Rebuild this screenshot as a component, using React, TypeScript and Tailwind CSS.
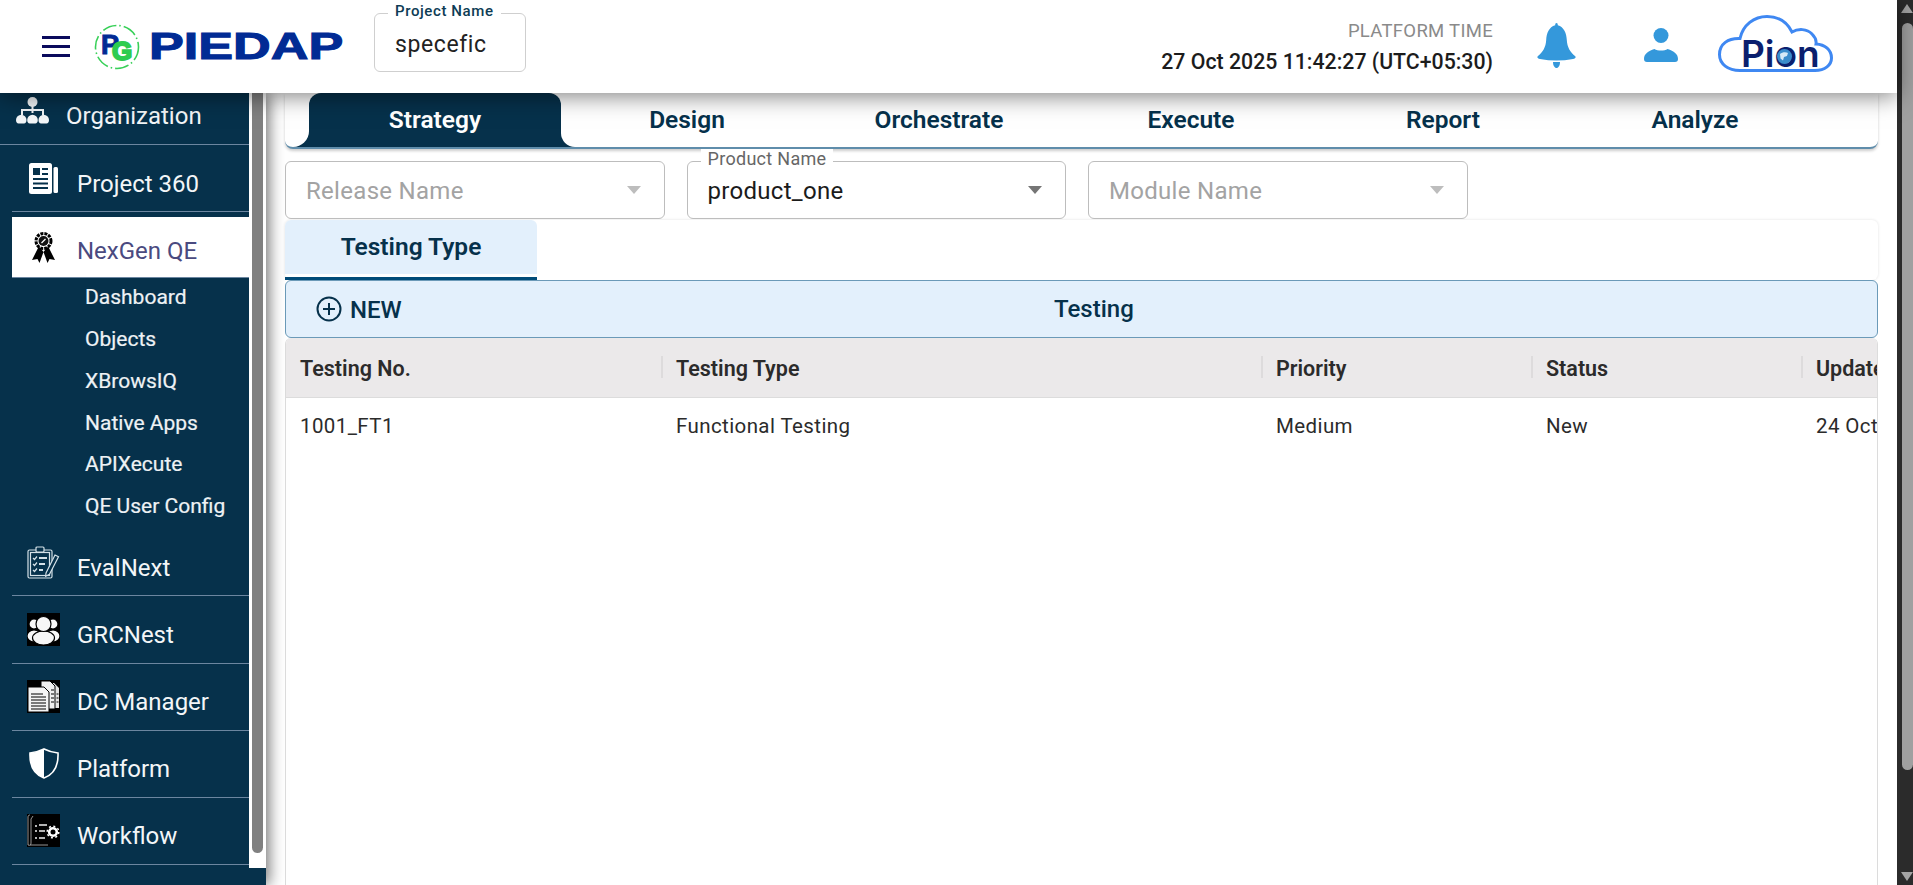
function LogoMark() {
  return (
    <svg width="46" height="46" viewBox="0 0 46 46" className="shrink-0">
      <circle cx="23" cy="23" r="21.5" fill="none" stroke="#38d058" strokeWidth="1.6" strokeDasharray="14 3 1.5 3" />
      <text x="7" y="30" fontFamily="Liberation Sans" fontWeight="700" fontSize="27" fill="#012b94" stroke="#012b94" strokeWidth="1">P</text>
      <text x="18" y="36" fontFamily="Liberation Sans" fontWeight="700" fontSize="26" fill="#2ecc4f" stroke="#2ecc4f" strokeWidth="2">G</text>
    </svg>
  )
}

function Bell() {
  return (
    <svg width="39" height="45" viewBox="0 0 39 45" fill="#3498db">
      <path d="M19.5 0c.9 0 1.3.8 1.3 2.2C27 4 29.5 10 29.8 17c.4 7 3.2 12 8.2 16 1.3 1.3.5 2.5-2 3-11 2-22 2-33 0-2.500-.5-3.300-1.700-2-3 5-4 7.800-9 8.200-16C9.500 10 12 4 18.200 2.200 18.200.8 18.600 0 19.500 0Z" />
      <path d="M16 39h7c0 3.500-1.600 6-3.500 6S16 42.500 16 39Z" />
    </svg>
  )
}

function Person() {
  return (
    <svg width="34" height="34" viewBox="0 0 34 34" fill="#3498db">
      <circle cx="17" cy="7.500" r="7.500" />
      <path d="M0 31c0-5 4-8 10.500-10 3 2 10 2 13 0C30 23 34 26 34 31c0 2-1 3-3 3H3c-2 0-3-1-3-3Z" />
    </svg>
  )
}

function PionLogo() {
  return (
    <svg width="115" height="57" viewBox="0 0 115 57" className="shrink-0">
      <path
        d="M22 55.500C10 55.500 1.500 49 1.500 39.500 1.500 29 10 23 22 23.500 25 10 36 1.500 49 1.500c11 0 20 5.500 25 15.500 6-3.500 15-3.500 20 2 3 3 4.500 7 4 10 9 .5 15.500 6 15.500 14 0 7-6.500 12.500-16.500 12.500Z"
        fill="#fff"
        stroke="#3f88f2"
        strokeWidth="3"
      />
      <text x="23" y="52" fontFamily="Inter" fontWeight="600" fontSize="37" fill="#0b1f6e">
        Pion
      </text>
      <circle cx="66.500" cy="41.500" r="7.500" fill="#3a8ccc" />
      <path d="M62 39c2-2 6-2.500 8-1l-1 3-3 1-1 3.500-2.500-2Z" fill="#d6eaf7" />
    </svg>
  )
}

function OrgIcon() {
  return (
    <svg width="33" height="27" viewBox="0 0 33 27" fill="#f3f6f8">
      <circle cx="16.500" cy="5" r="5" />
      <rect x="15.500" y="8" width="2" height="8" />
      <rect x="5" y="12" width="23" height="2" />
      <rect x="5" y="12" width="2" height="6" />
      <rect x="26" y="12" width="2" height="6" />
      <path d="M0 23a5 5 0 0 1 10.500 0c0 2-1 3.500-2.500 3.500H2.500C1 26.500 0 25 0 23Z" />
      <path d="M11.200 23a5.300 5.300 0 0 1 10.600 0c0 2-1 3.500-2.500 3.500h-5.600c-1.500 0-2.500-1.500-2.500-3.500Z" />
      <path d="M22.500 23a5 5 0 0 1 10.500 0c0 2-1 3.500-2.500 3.500H25c-1.500 0-2.500-1.500-2.500-3.500Z" />
    </svg>
  )
}

function NewsIcon() {
  return (
    <svg width="29" height="31" viewBox="0 0 29 31">
      <rect x="0" y="0" width="23" height="31" rx="2.500" fill="#fff" />
      <rect x="24.500" y="4" width="4.500" height="26" rx="1.500" fill="#fff" />
      <g fill="#06314b">
        <rect x="4" y="5" width="7" height="7" />
        <rect x="13" y="5" width="6" height="2" />
        <rect x="13" y="10" width="6" height="2" />
        <rect x="4" y="15" width="15" height="2" />
        <rect x="4" y="19.500" width="15" height="2" />
        <rect x="4" y="24" width="15" height="2" />
      </g>
    </svg>
  )
}

function MedalIcon() {
  return (
    <svg width="23" height="31" viewBox="0 0 23 31">
      <path d="M7 14 0 28l5.500-1 2 4 4-11Zm9 0 7 14-5.500-1-2 4-4-11Z" fill="#000" />
      <path d="M11 18v-4" stroke="#fff" strokeWidth="1" />
      <circle cx="11.500" cy="9" r="7.500" fill="#fff" stroke="#000" strokeWidth="3" strokeDasharray="3 1" />
      <circle cx="11.500" cy="9" r="5" fill="#111" />
      <path d="M9.500 11l4-4" stroke="#fff" strokeWidth="1.200" />
    </svg>
  )
}

function EvalIcon() {
  return (
    <svg width="33" height="33" viewBox="0 0 33 33" fill="none" stroke="#d4e1e8" strokeWidth="1.200">
      <rect x="1" y="4" width="24" height="28" rx="1.500" />
      <rect x="3.500" y="6.500" width="19" height="23" />
      <rect x="9" y="1" width="8" height="5" rx="1" fill="#06314b" />
      <path d="M6 12l1.500 1.500L10 10.500M6 18l1.500 1.500L10 16.500M6 24l1.500 1.500L10 22.500" />
      <path d="M12 12h8M12 18h6M12 24h4" strokeWidth="1.800" />
      <path d="M19 27l9-18 3.500 1.800-9 17.500-3.800 2Z" fill="#06314b" />
    </svg>
  )
}

function UsersIcon() {
  return (
    <svg width="33" height="33" viewBox="0 0 33 33">
      <rect width="33" height="33" fill="#000" />
      <g fill="#f7f7f7" stroke="#000" strokeWidth="1.200">
        <circle cx="7" cy="11" r="5" />
        <circle cx="26" cy="11" r="5" />
        <ellipse cx="7" cy="23" rx="7" ry="6" />
        <ellipse cx="26" cy="23" rx="7" ry="6" />
        <ellipse cx="16.500" cy="25" rx="11" ry="7" />
        <circle cx="16.500" cy="11" r="7.500" />
      </g>
    </svg>
  )
}

function DocsIcon() {
  return (
    <svg width="33" height="33" viewBox="0 0 33 33">
      <rect width="33" height="33" fill="#000" />
      <path d="M20 3h7l5 5v20H20Z" fill="#e4e4e4" />
      <path d="M14 1h9l5 5v23H14Z" fill="#f0f0f0" stroke="#000" />
      <path d="M1 7h16l5 5v20H1Z" fill="#f4f4f4" stroke="#000" />
      <path d="M4 14h12M4 17h15M4 20h15M4 23h15M4 26h15M4 29h15M24 10h3M24 14h3M24 18h3M24 22h3M29.500 14h2M29.500 18h2M29.500 22h2" stroke="#000" strokeWidth="1.200" />
    </svg>
  )
}

function WorkflowIcon() {
  return (
    <svg width="33" height="33" viewBox="0 0 33 33">
      <rect width="33" height="33" fill="#000" />
      <path d="M1 31V3c0-1.500 1-2 2-2M1 31c2 .8 3 0 3-2V5l2-3" fill="none" stroke="#bbb" strokeWidth=".8" />
      <path d="M3 31h18" stroke="#bbb" strokeWidth=".8" />
      <path d="M8 12h2M12 11h8M8 17h2M12 17h6M8 24h2M12 24h6" stroke="#eee" strokeWidth="1.500" />
      <circle cx="26" cy="18" r="3.800" fill="none" stroke="#fff" strokeWidth="2.600" />
      <circle cx="26" cy="18" r="5.800" fill="none" stroke="#fff" strokeWidth="1.500" strokeDasharray="2 2.500" />
    </svg>
  )
}

function ShieldIcon() {
  return (
    <svg width="30" height="31" viewBox="0 0 30 31">
      <path d="M15 1C10 3.500 6 4.500 1 5c-.5 12 3 21 14 25 11-4 14.500-13 14-25-5-.5-9-1.500-14-4Z" fill="none" stroke="#fff" strokeWidth="1.600" />
      <path d="M15 1C10 3.500 6 4.500 1 5c-.5 12 3 21 14 25Z" fill="#fff" />
    </svg>
  )
}

function NavRow({ icon, label, className }: { icon: React.ReactNode; label: string; className: string }) {
  return (
    <div className={`ml-[12px] flex items-center border-b border-[#6c86a0] pl-[15px] ${className}`}>
      <div className="flex w-[33px] shrink-0 justify-center">{icon}</div>
      <span className="ml-[17px] mt-[10px] text-[24px] leading-[26px] text-[#f3f6f8]">{label}</span>
    </div>
  )
}

function Sidebar() {
  const subItems = ['Dashboard', 'Objects', 'XBrowsIQ', 'Native Apps', 'APIXecute', 'QE User Config']
  return (
    <aside className="relative z-10 w-[266px] shrink-0 bg-[#06314b] shadow-[3px_0_14px_rgba(0,0,0,0.55)]">
      <div className="flex h-[775px] overflow-hidden">
        <nav className="w-[249px] shrink-0">
          <div className="flex h-[52px] items-center border-b border-[#6c86a0] pb-[16px] pl-[16px]">
            <div className="w-[33px] shrink-0">
              <OrgIcon />
            </div>
            <span className="ml-[17px] mt-[10px] text-[24px] leading-[26px] text-[#f3f6f8]">Organization</span>
          </div>
          <NavRow icon={<NewsIcon />} label="Project 360" className="h-[67px] pt-px" />
          <div className="ml-[12px] mt-[5px] flex h-[61px] items-center border-b border-[#6c86a0] bg-white pl-[15px]">
            <div className="flex w-[33px] shrink-0 justify-center">
              <MedalIcon />
            </div>
            <span className="ml-[17px] mt-[7px] text-[24px] leading-[26px] text-[#4a4a80]">NexGen QE</span>
          </div>
          <div className="-mt-px pl-[85px]">
            {subItems.map((item) => (
              <div key={item} className="flex h-[41.800px] items-center text-[21px] text-[#eef2f5] [-webkit-text-stroke:0.2px_#eef2f5]">
                {item}
              </div>
            ))}
          </div>
          <NavRow icon={<EvalIcon />} label="EvalNext" className="h-[68px] pt-[3px]" />
          <NavRow icon={<UsersIcon />} label="GRCNest" className="h-[68px] pt-px" />
          <NavRow icon={<DocsIcon />} label="DC Manager" className="h-[67px]" />
          <NavRow icon={<ShieldIcon />} label="Platform" className="h-[67px]" />
          <NavRow icon={<WorkflowIcon />} label="Workflow" className="h-[67px]" />
        </nav>
        <div className="w-[17px] bg-white pl-[3px]">
          <div className="h-[760px] w-[11px] rounded-b-lg bg-[#808080]" />
        </div>
      </div>
    </aside>
  )
}

function Header() {
  return (
    <header className="relative z-20 flex h-[93px] shrink-0 items-center bg-white pl-[42px] pr-[64px] shadow-[0_3px_22px_rgba(0,0,0,0.5)]">
      <div className="flex w-[28px] flex-col gap-[6px]">
        <div className="h-[3px] bg-[#0a0a5c]" />
        <div className="h-[3px] bg-[#0a0a5c]" />
        <div className="h-[3px] bg-[#0a0a5c]" />
      </div>
      <div className="ml-[24px]">
        <LogoMark />
      </div>
      <div className="ml-[9px] w-[193px] whitespace-nowrap">
        <span className="inline-block origin-left scale-x-[1.41] font-['Liberation_Sans'] text-[37px] font-bold leading-none text-[#012b94] [-webkit-text-stroke:1px_#012b94]">
          PIEDAP
        </span>
      </div>
      <div className="relative ml-[32px] -mt-[8px] flex h-[59px] w-[152px] items-center rounded-md border border-[#cfcfcf] pl-[20px] pt-[6px] text-[23px] tracking-[0.6px] text-[#222]">
        specefic
        <span className="absolute -top-[13px] left-[13px] bg-white px-[7px] text-[15px] font-medium leading-[20px] text-[#0d3c55]">
          Project Name
        </span>
      </div>
      <div className="ml-auto flex flex-col items-end">
        <div className="text-[18.500px] leading-[22px] tracking-[0.3px] text-[#8a8a8a]">PLATFORM TIME</div>
        <div className="mt-[8px] text-[21.300px] font-medium leading-[24px] text-[#1c1c1c]">27 Oct 2025 11:42:27 (UTC+05:30)</div>
      </div>
      <div className="ml-[44px] -mt-[3px]">
        <Bell />
      </div>
      <div className="ml-[68px] -mt-[3px]">
        <Person />
      </div>
      <div className="ml-[40px] -mt-[6px]">
        <PionLogo />
      </div>
    </header>
  )
}

function TabBar() {
  const tabs = ['Design', 'Orchestrate', 'Execute', 'Report', 'Analyze']
  return (
    <div className="flex h-[56px] shrink-0 rounded-b-lg border-b-2 border-[#5f8dab] bg-white pl-[24px] text-[24.500px] font-semibold text-[#06314b] shadow-[0_2px_3px_rgba(0,0,0,0.2)]">
      <div className="relative flex w-[252px] items-center justify-center rounded-t-xl bg-[#06314b] pt-[1px] text-white">
        Strategy
        <span className="absolute bottom-0 -left-[16px] h-[16px] w-[16px] bg-[#06314b]">
          <span className="block h-full w-full rounded-br-2xl bg-white" />
        </span>
        <span className="absolute -right-[14px] bottom-0 h-[14px] w-[14px] bg-[#06314b]">
          <span className="block h-full w-full rounded-bl-2xl bg-white" />
        </span>
      </div>
      {tabs.map((tab) => (
        <div key={tab} className="flex w-[252px] items-center justify-center pt-[1px]">
          {tab}
        </div>
      ))}
    </div>
  )
}

function SelectBox({ label, value }: { label: string; value?: string }) {
  return (
    <div className="relative flex h-[58px] w-[379.500px] items-center justify-between rounded-md border border-[#bdbdbd] pl-[20px] pr-[23px] text-[24px]">
      {value ? (
        <>
          <span className="absolute -top-[13px] left-[13px] bg-white px-[7px] text-[18px] leading-[20px] tracking-[0.3px] text-[#666]">{label}</span>
          <span className="mt-px tracking-[0.3px] text-[#1b1b1b]">{value}</span>
          <span className="h-0 w-0 border-x-[7px] border-t-[8px] border-x-transparent border-t-[#757575]" />
        </>
      ) : (
        <>
          <span className="mt-px tracking-[0.3px] text-[#a3a3a3]">{label}</span>
          <span className="h-0 w-0 border-x-[7px] border-t-[8px] border-x-transparent border-t-[#bdbdbd]" />
        </>
      )}
    </div>
  )
}

function TestingTable() {
  const columns = ['Testing No.', 'Testing Type', 'Priority', 'Status', 'Update']
  const row = ['1001_FT1', 'Functional Testing', 'Medium', 'New', '24 Oct']
  const cols = 'grid grid-cols-[376px_600px_270px_270px_270px]'
  return (
    <div className="min-h-0 flex-1 overflow-hidden rounded-t-md border-x border-[#dcdcdc]">
      <div className={`${cols} h-[60px] items-center border-b border-[#dcdcdc] bg-[#ebe9ea] pt-[3px]`}>
        {columns.map((col, i) => (
          <div key={col} className="relative whitespace-nowrap pl-[14px] text-[21.500px] font-semibold text-[#2b2b2b]">
            {i > 0 && <span className="absolute -left-px top-[3px] h-[22px] w-[2px] bg-[#dddbdc]" />}
            {col}
          </div>
        ))}
      </div>
      <div className={`${cols} h-[56px] items-center`}>
        {row.map((cell) => (
          <div key={cell} className="whitespace-nowrap pl-[14px] text-[20.500px] tracking-[0.4px] text-[#2b2b2b]">
            {cell}
          </div>
        ))}
      </div>
    </div>
  )
}

function MainContent() {
  return (
    <main className="flex min-w-0 flex-1 flex-col px-[19px]">
      <TabBar />
      <div className="mt-[12px] flex shrink-0 gap-[22px]">
        <SelectBox label="Release Name" />
        <SelectBox label="Product Name" value="product_one" />
        <SelectBox label="Module Name" />
      </div>
      <div className="mt-px h-[60px] shrink-0 rounded-md bg-white shadow-[0_0_3px_rgba(0,0,0,0.12)]">
        <div className="h-[60px] w-[252px] border-b-[3px] border-[#004b78]">
          <div className="flex h-[54px] items-center justify-center rounded-t-md bg-[#e3f0fc] text-[24.500px] font-semibold text-[#06314b]">Testing Type</div>
        </div>
      </div>
      <div className="flex h-[58px] shrink-0 items-center rounded-md border border-[#6b9ab8] bg-[#e3f0fc] pl-[30px] text-[24px] font-medium text-[#06314b]">
        <svg width="26" height="26" viewBox="0 0 26 26" fill="none" stroke="#06314b" strokeWidth="2">
          <circle cx="13" cy="13" r="11.500" />
          <path d="M13 7v12M7 13h12" />
        </svg>
        <span className="ml-[8px] mt-px">NEW</span>
        <span className="flex-1 pr-[91px] text-center">Testing</span>
      </div>
      <TestingTable />
    </main>
  )
}

function PageScrollbar() {
  return (
    <div className="flex w-[16px] shrink-0 flex-col items-end bg-[#2b2b2b]">
      <span className="mt-[4px] h-0 w-0 border-x-[6px] border-b-[9px] border-x-transparent border-b-[#a3a3a3]" />
      <div className="mt-[10px] h-[747px] w-[11px] rounded-t-md rounded-b-md bg-[#a0a0a0]" />
      <span className="mt-auto mb-[4px] h-0 w-0 border-x-[6px] border-t-[9px] border-x-transparent border-t-[#a3a3a3]" />
    </div>
  )
}

export default function App() {
  return (
    <div className="flex h-screen w-full overflow-hidden bg-white font-['Roboto',sans-serif]">
      <div className="flex min-w-0 flex-1 flex-col">
        <Header />
        <div className="flex min-h-0 flex-1">
          <Sidebar />
          <MainContent />
        </div>
      </div>
      <PageScrollbar />
    </div>
  )
}
